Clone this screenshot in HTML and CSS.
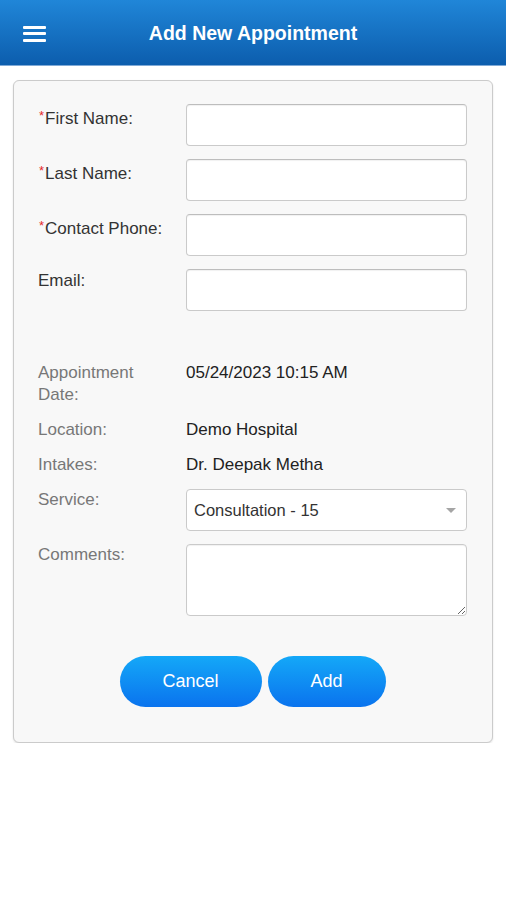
FILE: index.html
```html
<!DOCTYPE html>
<html lang="en">
<head>
    <meta charset="UTF-8">
    <meta name="viewport" content="width=device-width, initial-scale=1.0">
    <title>Add New Appointment</title>
    <link rel="stylesheet" href="styles.css">
</head>
<body>

    <header class="topbar">
        <div class="menu-btn">
            <span></span>
            <span></span>
            <span></span>
        </div>
        <h1>Add New Appointment</h1>
        <div></div>
    </header>

    <div class="card">
        <form class="form-grid">
            <label class="field-label"><span class="req">*</span>First Name:</label>
            <input type="text" class="text-input">

            <label class="field-label"><span class="req">*</span>Last Name:</label>
            <input type="text" class="text-input">

            <label class="field-label"><span class="req">*</span>Contact Phone:</label>
            <input type="text" class="text-input">

            <label class="field-label">Email:</label>
            <input type="text" class="text-input">

            <div class="info-label spaced">Appointment<br>Date:</div>
            <div class="info-value spaced">05/24/2023 10:15 AM</div>

            <div class="info-label">Location:</div>
            <div class="info-value">Demo Hospital</div>

            <div class="info-label">Intakes:</div>
            <div class="info-value">Dr. Deepak Metha</div>

            <div class="info-label">Service:</div>
            <div class="select-box">
                <span>Consultation - 15</span>
                <span class="arrow"></span>
            </div>

            <div class="info-label">Comments:</div>
            <textarea class="comments"></textarea>
        </form>

        <div class="actions">
            <button class="pill-btn cancel">Cancel</button>
            <button class="pill-btn add">Add</button>
        </div>
    </div>

</body>
</html>
```

FILE: styles.css
```css
html, body {
    margin: 0;
}

body {
    font-family: 'Liberation Sans', Arial, sans-serif;
    background-color: #fff;
    color: #222;
}

.topbar {
    display: grid;
    grid-template-columns: 1fr auto 1fr;
    align-items: center;
    height: 63px;
    padding-top: 2px;
    background: linear-gradient(to bottom, #2086d8, #0c5dad);
    border-bottom: 1px solid #7fa9d6;
}

.topbar h1 {
    margin: 0;
    font-size: 19.5px;
    font-weight: bold;
    color: #fff;
}

.menu-btn {
    display: flex;
    flex-direction: column;
    gap: 3.5px;
    width: 23px;
    margin-left: 23px;
}

.menu-btn span {
    display: block;
    height: 3px;
    background-color: #fff;
    border-radius: 1px;
}

.card {
    margin: 14px 13px 0;
    padding: 23px 25px 35px 24px;
    background-color: #f8f8f8;
    border: 1px solid #cbcbcb;
    border-radius: 6px;
    box-shadow: 0 1px 2px rgba(0, 0, 0, 0.12);
}

.form-grid {
    display: grid;
    grid-template-columns: 148px 1fr;
    row-gap: 13px;
    margin: 0;
}

.field-label,
.info-label,
.info-value {
    font-size: 17px;
    line-height: 22px;
}

.field-label {
    color: #333;
    padding-top: 1px;
}

.info-label {
    color: #777;
}

.info-value {
    color: #222;
}

.spaced {
    margin-top: 38px;
}

.req {
    color: #e52a2a;
    font-size: 13px;
    vertical-align: 4px;
    margin: 0 1px;
}

.text-input {
    height: 42px;
    box-sizing: border-box;
    border: 1px solid #cacaca;
    border-top-color: #bdbdbd;
    border-radius: 4px;
    background-color: #fff;
    box-shadow: inset 0 1px 1px rgba(0, 0, 0, 0.06);
    font-size: 15px;
    padding: 0 8px;
    outline: none;
}

.select-box {
    height: 42px;
    box-sizing: border-box;
    display: flex;
    align-items: center;
    justify-content: space-between;
    padding: 0 10px 0 7px;
    border: 1px solid #cacaca;
    border-radius: 4px;
    background-color: #fff;
    font-size: 16.5px;
    color: #333;
}

.select-box .arrow {
    width: 0;
    height: 0;
    border-left: 5px solid transparent;
    border-right: 5px solid transparent;
    border-top: 5px solid #a5a5a5;
}

.comments {
    height: 72px;
    box-sizing: border-box;
    border: 1px solid #cacaca;
    border-radius: 4px;
    background-color: #fff;
    box-shadow: inset 0 1px 1px rgba(0, 0, 0, 0.06);
    font-family: inherit;
    font-size: 15px;
    outline: none;
}

.actions {
    display: flex;
    justify-content: center;
    gap: 6px;
    margin-top: 40px;
}

.pill-btn {
    height: 51px;
    border: none;
    border-radius: 26px;
    background: linear-gradient(to bottom, #14a8f8, #0a73ee);
    color: #fff;
    font-family: inherit;
    font-size: 18px;
    cursor: pointer;
}

.cancel {
    width: 142px;
}

.add {
    width: 118px;
}
```
